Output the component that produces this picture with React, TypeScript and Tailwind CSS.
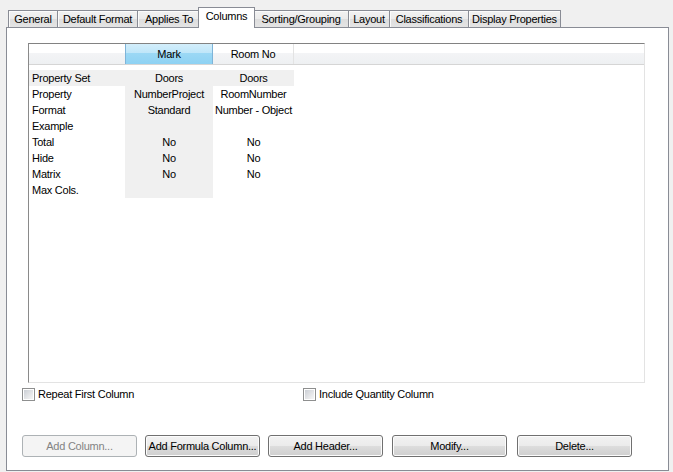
import React from "react";

const tabs = [
  { label: "General", w: "w-[49px]" },
  { label: "Default Format", w: "w-[80px]" },
  { label: "Applies To", w: "w-[63px]" },
  { label: "Columns", w: "w-[57px]", active: true },
  { label: "Sorting/Grouping", w: "w-[95px]" },
  { label: "Layout", w: "w-[41px]" },
  { label: "Classifications", w: "w-[79px]" },
  { label: "Display Properties", w: "w-[93px]" },
];

const rows = [
  ["Property Set", "Doors", "Doors"],
  ["Property", "NumberProject", "RoomNumber"],
  ["Format", "Standard", "Number - Object"],
  ["Example", "", ""],
  ["Total", "No", "No"],
  ["Hide", "No", "No"],
  ["Matrix", "No", "No"],
  ["Max Cols.", "", ""],
];

const buttons = [
  { label: "Add Column...", disabled: true, ml: "ml-0" },
  { label: "Add Formula Column...", ml: "ml-[8px]" },
  { label: "Add Header...", ml: "ml-[8px]" },
  { label: "Modify...", ml: "ml-[9px]" },
  { label: "Delete...", ml: "ml-[10px]" },
];

function Checkbox({ label }: { label: string }) {
  return (
    <div className="flex items-center gap-[3px]">
      <div className="w-[13px] h-[13px] border border-[#8e8f8f] bg-white p-[1px]">
        <div className="w-full h-full bg-[linear-gradient(135deg,#cbcfd5_0%,#e6e7e9_60%,#f6f6f6_100%)]" />
      </div>
      <span>{label}</span>
    </div>
  );
}

export default function App() {
  return (
    <div className="w-[673px] h-[472px] bg-[#f0f0f0] pt-[7px] text-[11px] tracking-[-0.25px] text-black font-['Liberation_Sans',Arial,sans-serif] overflow-hidden">
      {/* Tabs */}
      <div className="flex items-start pl-[8px] h-[20px] relative z-10">
        {tabs.map((t) =>
          t.active ? (
            <div
              key={t.label}
              className={`${t.w} -mx-[2px] h-[21px] relative z-10 bg-white border border-b-0 border-[#898c95] flex items-center justify-center pb-[3px]`}
            >
              {t.label}
            </div>
          ) : (
            <div
              key={t.label}
              className={`${t.w} mt-[3px] h-[17px] border border-b-0 border-r-0 last:border-r border-[#898c95] bg-[linear-gradient(to_bottom,#f2f2f2_0%,#ebebeb_50%,#dddddd_50%,#e4e4e4_100%)] shadow-[inset_1px_1px_0_#fbfbfb] flex items-center justify-center`}
            >
              {t.label}
            </div>
          )
        )}
      </div>

      {/* Panel */}
      <div className="ml-[6px] w-[663px] h-[444px] border border-[#898c95] bg-white pt-[15px]">
        {/* Grid */}
        <div className="ml-[21px] w-[617px] h-[340px] border border-t-[#828282] border-l-[#8a8a8a] border-r-[#e3e3e3] border-b-[#e3e3e3] bg-white">
          <div className="flex h-[21px] bg-[linear-gradient(to_bottom,#ffffff_0%,#ffffff_45%,#f3f4f6_45%,#eef0f2_100%)] border-b border-[#d5d5d5]">
            <div className="w-[96px]" />
            <div className="w-[88px] flex items-center justify-center border-x border-[#7eb4d8] bg-[linear-gradient(to_bottom,#d3eefb_0%,#bfe6f9_45%,#9cd8f5_45%,#8ed2f3_100%)]">
              Mark
            </div>
            <div className="w-[81px] flex items-center justify-center border-r border-[#e3e3e3]">
              Room No
            </div>
          </div>
          <div className="mt-[5px]">
            {rows.map((r, i) => (
              <div key={r[0]} className={`flex h-[16px] items-center w-[265px] ${i === 0 ? "bg-[#f0f0f0]" : ""}`}>
                <div className="w-[96px] pl-[3px]">{r[0]}</div>
                <div className="w-[88px] h-full flex items-center justify-center bg-[#f0f0f0]">{r[1]}</div>
                <div className="w-[81px] text-center">{r[2]}</div>
              </div>
            ))}
          </div>
        </div>

        {/* Checkboxes */}
        <div className="flex ml-[15px] mt-[5px] h-[13px] items-center">
          <div className="w-[281px]">
            <Checkbox label="Repeat First Column" />
          </div>
          <Checkbox label="Include Quantity Column" />
        </div>

        {/* Buttons */}
        <div className="flex ml-[15px] mt-[34px]">
          {buttons.map((b) =>
            b.disabled ? (
              <div
                key={b.label}
                className={`${b.ml} w-[115px] h-[22px] rounded-[3px] border border-[#adb2b5] bg-[#f4f4f4] text-[#838383] flex items-center justify-center`}
              >
                {b.label}
              </div>
            ) : (
              <div
                key={b.label}
                className={`${b.ml} w-[115px] h-[22px] rounded-[3px] border border-[#707070] bg-[linear-gradient(to_bottom,#f2f2f2_0%,#ebebeb_50%,#dddddd_50%,#cfcfcf_100%)] shadow-[inset_0_0_0_1px_#fcfcfc] flex items-center justify-center`}
              >
                {b.label}
              </div>
            )
          )}
        </div>
      </div>
    </div>
  );
}
